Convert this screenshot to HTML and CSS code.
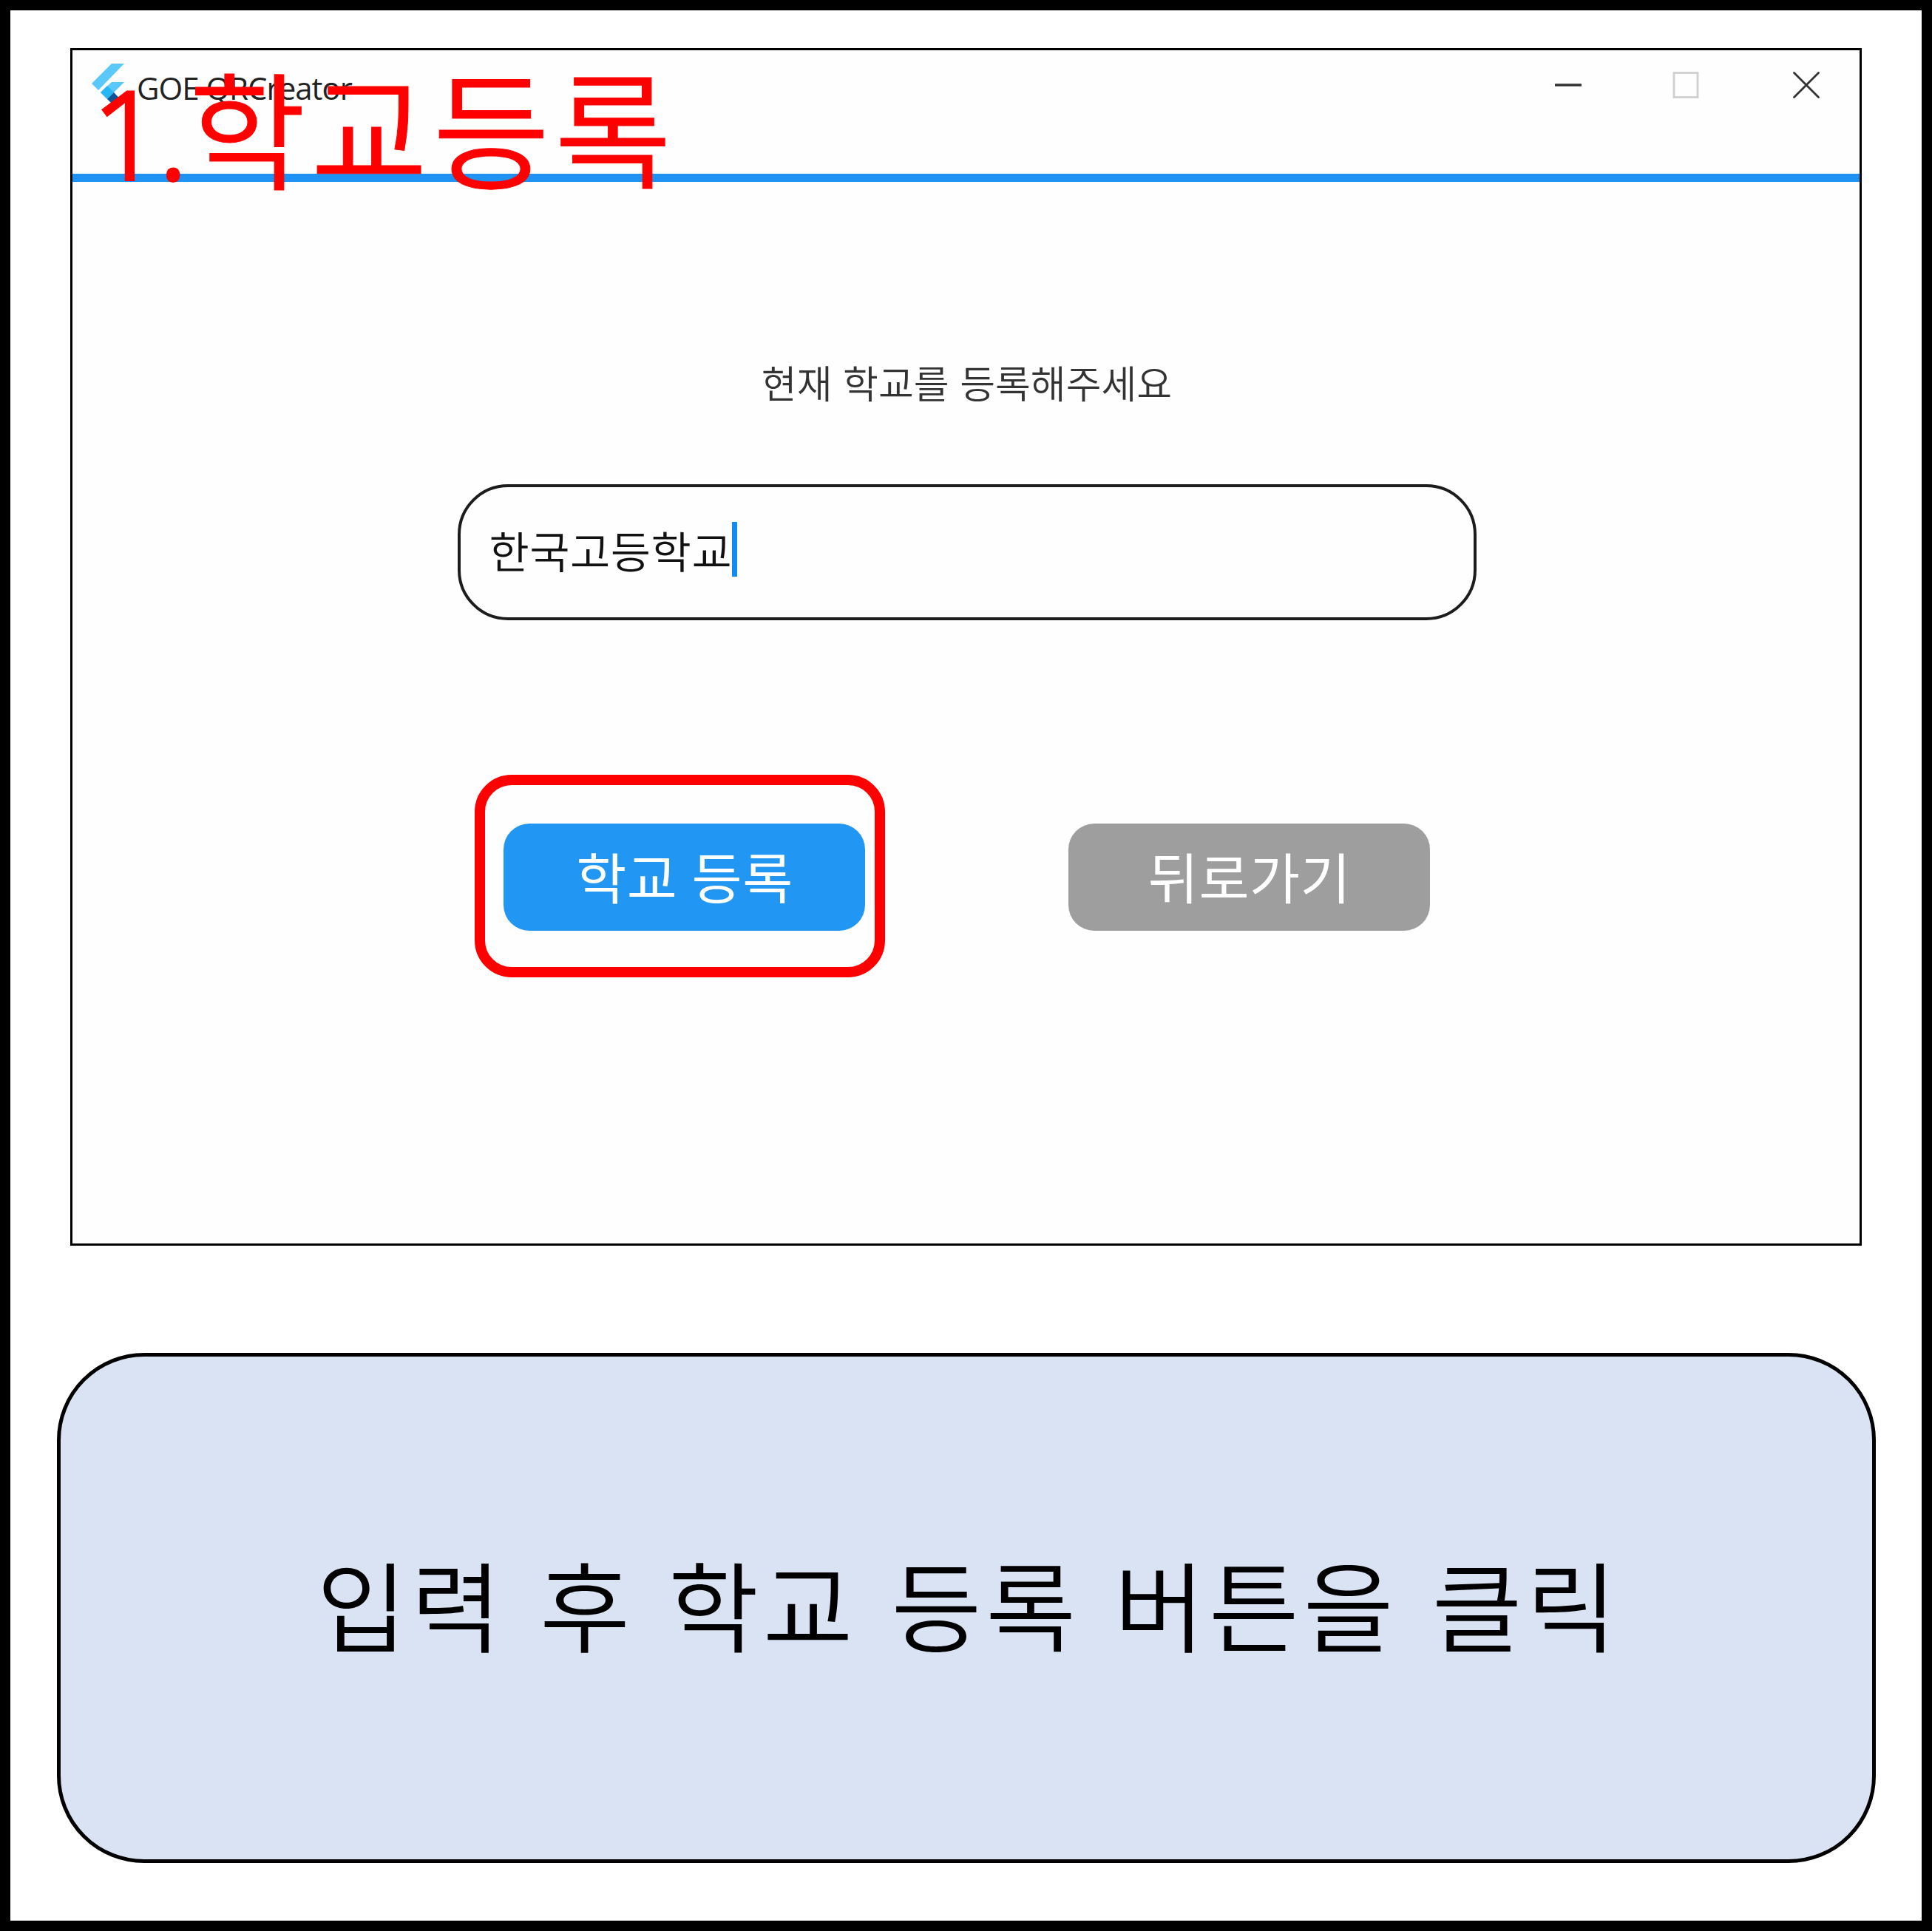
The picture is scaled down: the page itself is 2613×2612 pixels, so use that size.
FILE: index.html
```html
<!DOCTYPE html>
<html lang="ko">
<head>
<meta charset="utf-8">
<title>GOE QRCreator</title>
<link rel="stylesheet" href="styles.css">
</head>
<body>
<main class="slide">
  <section class="window">
    <header class="titlebar">
      <svg class="logo" viewBox="0 0 46 56" width="46" height="56">
        <path d="M28 1H45L10 37L1 28Z" fill="#5bc8fa"/>
        <path d="M28 26H45L22 49L13 40Z" fill="#5bc8fa"/>
        <path d="M13 40L22 31L31 40L22 49Z" fill="#29b6f6"/>
        <path d="M22 49L31 40L45 55H28Z" fill="#0f5596"/>
      </svg>
      <span class="app-name">GOE QRCreator</span>
      <div class="controls">
        <svg width="36" height="38" viewBox="0 0 36 38"><path d="M1 19H35" stroke="#333" stroke-width="3.4" stroke-linecap="round"/></svg>
        <svg class="maximize" width="36" height="38" viewBox="0 0 36 38"><rect x="2" y="2.5" width="32" height="33" fill="none" stroke="#d0d0d0" stroke-width="2.8"/></svg>
        <svg width="36" height="38" viewBox="0 0 36 38"><path d="M1.5 2.5L34.5 35.5M34.5 2.5L1.5 35.5" stroke="#333" stroke-width="2.8" stroke-linecap="round"/></svg>
      </div>
      <h1 class="step"><span class="step-num">1.</span>학교등록</h1>
    </header>
    <div class="content">
      <p class="prompt">현재 학교를 등록해주세요</p>
      <div class="field"><span class="value">한국고등학교</span><i class="caret"></i></div>
      <div class="actions">
        <div class="btn primary">학교 등록<i class="highlight"></i></div>
        <div class="btn secondary">뒤로가기</div>
      </div>
    </div>
  </section>
  <section class="caption">입력 후 학교 등록 버튼을 클릭</section>
</main>
</body>
</html>
```

FILE: styles.css
```css
* { box-sizing: border-box; }

body {
  margin: 0;
  font-family: "Noto Sans CJK KR", sans-serif;
  font-weight: 400;
}

.slide {
  width: 2613px;
  height: 2612px;
  border: 14px solid #000;
  background: #fff;
  padding: 51px 62px 0 63px;
  display: flex;
  flex-direction: column;
}

.window {
  margin: 0 5px 0 18px;
  width: 2423px;
  height: 1620px;
  border: 3px solid #000;
  background: #fefefe;
  flex: none;
}

.titlebar {
  position: relative;
  height: 178px;
  border-bottom: 11px solid #1e93f4;
  padding: 17px 54px 0 25px;
  display: flex;
  align-items: flex-start;
}

.logo { flex: none; }

.app-name {
  margin: 9px 0 0 16px;
  font: 400 42px/50px "Open Sans", sans-serif;
  letter-spacing: -1px;
  color: #222;
  white-space: nowrap;
}

.controls {
  margin: 11px 0 0 auto;
  display: flex;
  gap: 125px;
}

.maximize { margin: 0 2px 0 -2px; }

.step {
  position: absolute;
  left: 26px;
  top: -10px;
  margin: 0;
  font-size: 172px;
  font-weight: 350;
  line-height: 220px;
  letter-spacing: 6.7px;
  -webkit-text-stroke: 1px #f00;
  color: #f00;
  white-space: nowrap;
}

.step-num {
  margin-right: 6px;
  font-family: "Noto Sans", sans-serif;
  font-size: 166px;
  font-weight: 300;
  letter-spacing: -5px;
  -webkit-text-stroke: 4px #f00;
}

.content {
  padding-left: 2px;
  display: flex;
  flex-direction: column;
  align-items: center;
}

.prompt {
  margin: 231px 0 0;
  font-size: 52px;
  font-weight: 350;
  line-height: 80px;
  color: #333;
  white-space: nowrap;
}

.field {
  margin-top: 98px;
  width: 1378px;
  height: 184px;
  border: 4px solid #1c1c1c;
  border-radius: 68px;
  padding: 0 0 8px 39px;
  display: flex;
  align-items: center;
  font-size: 59px;
  font-weight: 350;
  letter-spacing: 0.5px;
  color: #111;
}

.caret {
  width: 7px;
  height: 74px;
  background: #118cf3;
}

.actions {
  margin-top: 275px;
  display: flex;
  gap: 275px;
}

.btn {
  position: relative;
  width: 489px;
  height: 145px;
  border-radius: 35px;
  padding: 0 0 5px 1px;
  display: flex;
  align-items: center;
  justify-content: center;
  font-size: 74px;
  letter-spacing: 0.5px;
  word-spacing: -2px;
  line-height: 100px;
  color: #fff;
}

.primary { background: #2196f3; }
.secondary { background: #9e9e9e; }

.highlight {
  position: absolute;
  left: -39px;
  top: -66px;
  width: 555px;
  height: 274px;
  border: 14px solid #f00;
  border-radius: 50px;
}

.caption {
  margin-top: 145px;
  width: 2460px;
  height: 690px;
  border: 5px solid #000;
  border-radius: 118px;
  background: #dae3f3;
  padding: 0 0 16px 6px;
  display: flex;
  align-items: center;
  justify-content: center;
  font-size: 133px;
  font-weight: 350;
  letter-spacing: 5.4px;
  word-spacing: 3.5px;
  white-space: nowrap;
}
```
